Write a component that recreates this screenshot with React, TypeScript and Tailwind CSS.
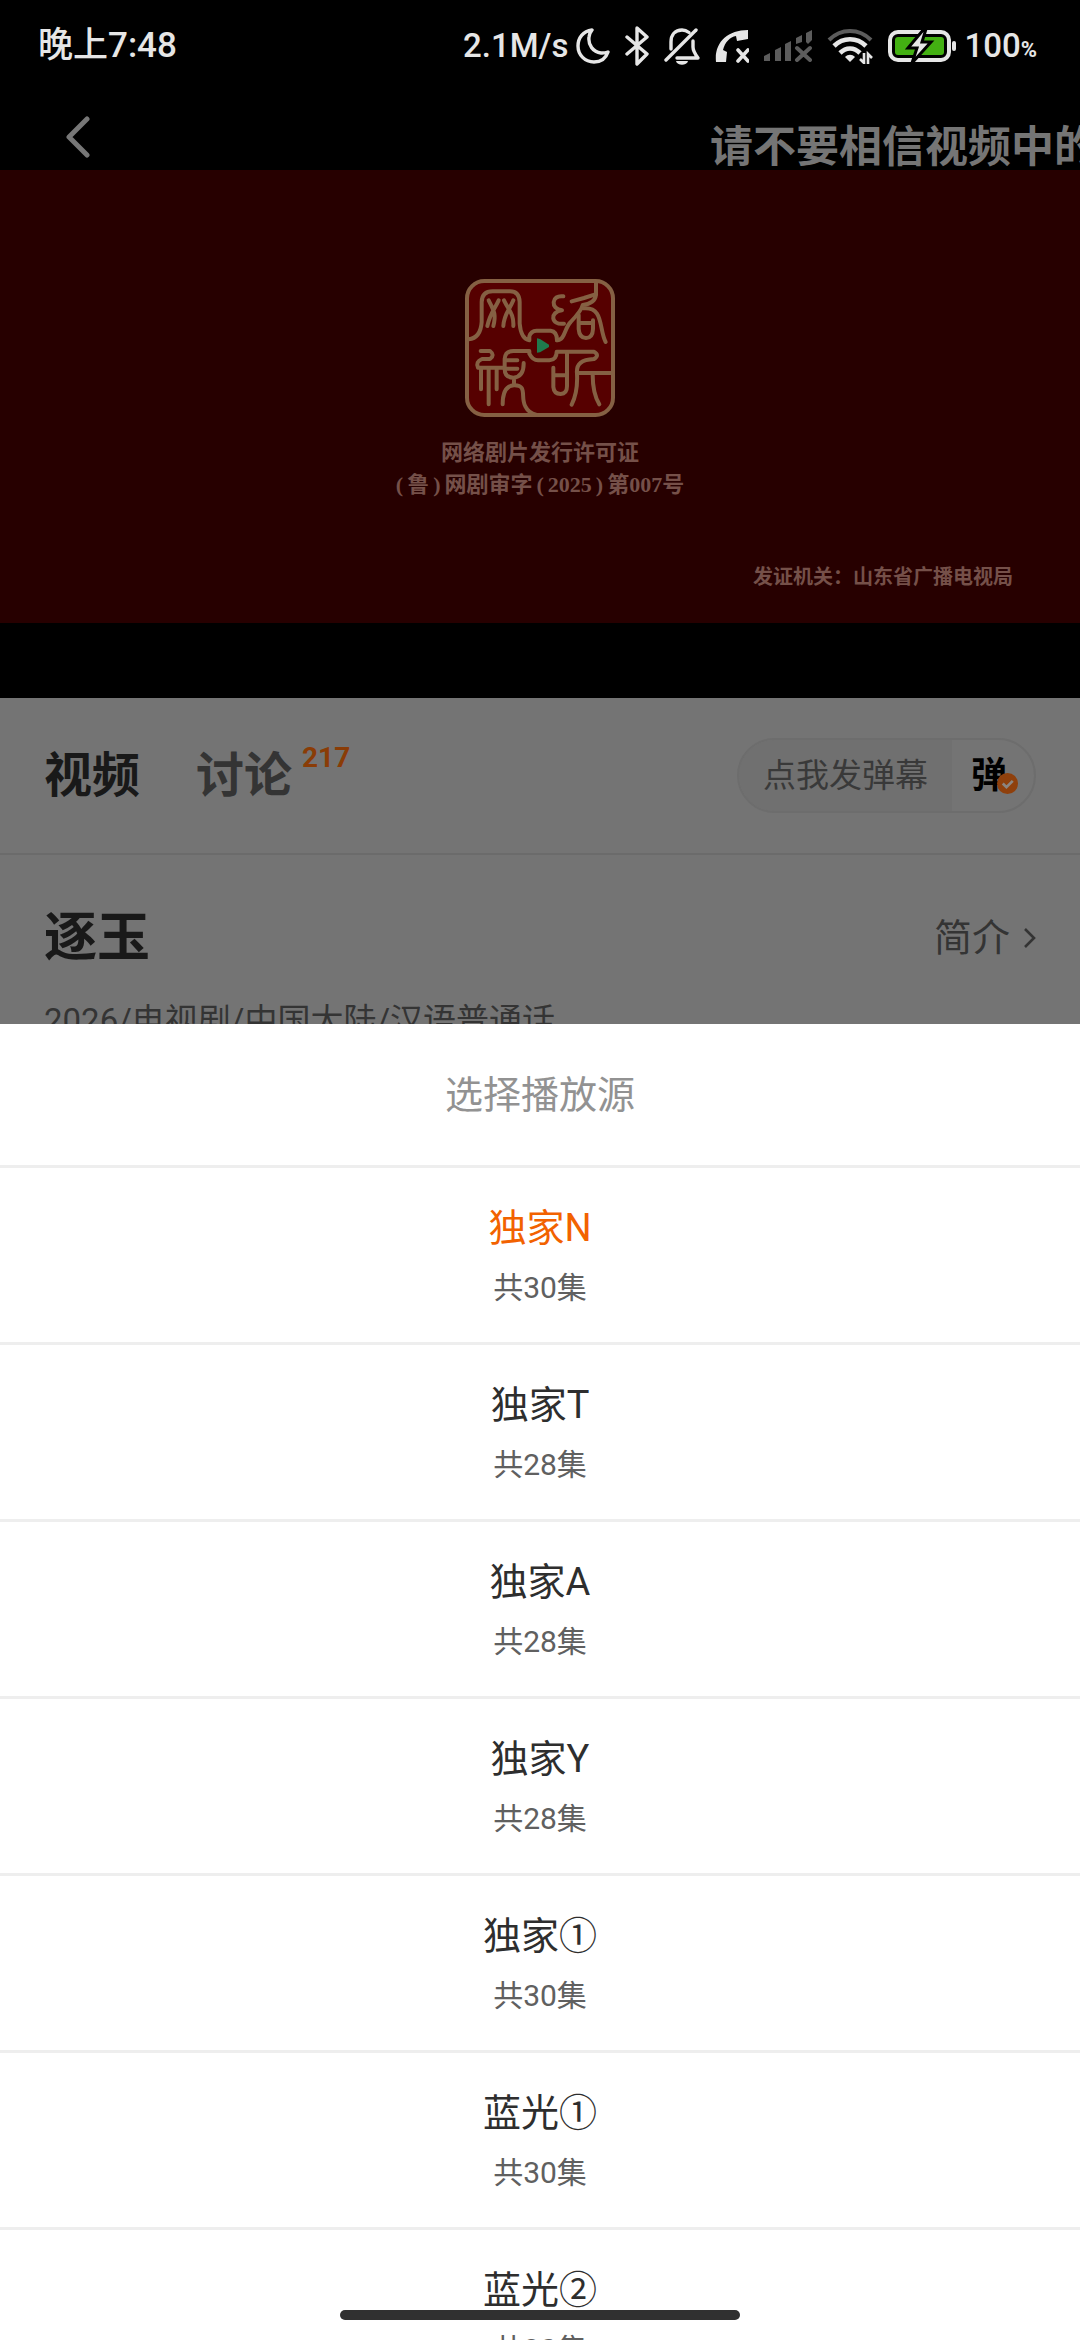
import { useState } from "react";
import clsx from "clsx";

interface Source {
  id: string;
  name: string;
  episodes: number;
}

const sources: Source[] = [
  { id: "n", name: "独家N", episodes: 30 },
  { id: "t", name: "独家T", episodes: 28 },
  { id: "a", name: "独家A", episodes: 28 },
  { id: "y", name: "独家Y", episodes: 28 },
  { id: "x1", name: "独家①", episodes: 30 },
  { id: "b1", name: "蓝光①", episodes: 30 },
  { id: "b2", name: "蓝光②", episodes: 30 },
];

function StatusIcons() {
  return (
    <div className="flex items-center gap-[15px]" aria-hidden="true">
      <svg className="w-[34px] h-[36px]" viewBox="0 0 34 36" fill="none" stroke="#e6e6e6" strokeWidth="3.4" strokeLinejoin="round">
        <path d="M16 2C7 3 2 10 2 18c0 9 7 16 16 16 7 0 12-4 14-10-3 1-5 1.200-7 1C17 24 12 17 13 9c.3-3 1.400-5 3-7z" />
      </svg>
      <svg className="w-[24px] h-[40px]" viewBox="0 0 24 40" fill="none" stroke="#e6e6e6" strokeWidth="3.4" strokeLinejoin="round" strokeLinecap="round">
        <path d="M2 11l20 17-10 10V2l10 9L2 28" />
      </svg>
      <svg className="w-[36px] h-[38px]" viewBox="0 0 36 38" fill="none" stroke="#e6e6e6" strokeWidth="3.4" strokeLinecap="round" strokeLinejoin="round">
        <path d="M7 22v-7C7 8 11 3 18 3c3 0 5 1 7 2.500" />
        <path d="M2 33L32 3" />
        <path d="M13 31h21c-3-4-5-7-5-11v-6" />
        <path d="M12 34h12c-1 5-11 5-12 0z" fill="#e6e6e6" stroke="none" />
      </svg>
      <svg className="w-[34px] h-[34px]" viewBox="0 0 34 34" fill="none">
        <path d="M1 33C-1 14 12 1 33 1v9l-11 2-1-5C15 8 10 13 8 21l4 2-1 10z" fill="#e6e6e6" />
        <path d="M23 21l10 11M33 21L23 32" stroke="#e6e6e6" strokeWidth="3.600" strokeLinecap="round" />
      </svg>
      <svg className="w-[48px] h-[32px]" viewBox="0 0 48 32" fill="#5c5c5c">
        <path d="M0 31v-5l6-3v8zM11 31V20l6-3v14zM21 31V14l6-3v20zM32 14V8l6-3v7zM42 12V3l6-3v10l-4 4z" />
        <path d="M33 18l13 12M46 18L33 30" stroke="#5c5c5c" strokeWidth="4" strokeLinecap="round" />
      </svg>
      <svg className="w-[46px] h-[36px]" viewBox="0 0 46 36" fill="none" strokeWidth="4">
        <path d="M2 12C14 0 32 0 44 12" stroke="#5c5c5c" />
        <path d="M7 18c9-9 23-9 32 0M13 25c6-6 14-6 20 0" stroke="#e6e6e6" strokeWidth="4.600" />
        <path d="M23 34l-5-5c3-3 7-3 10 0z" fill="#e6e6e6" />
        <path d="M37 25v10l-4-4M41 36V26l4 4" stroke="#e6e6e6" strokeWidth="2.600" />
      </svg>
      <svg className="w-[68px] h-[34px]" viewBox="0 0 68 34" fill="none">
        <rect x="2" y="3" width="59" height="28" rx="8" stroke="#e6e6e6" strokeWidth="4" />
        <rect x="7" y="8" width="49" height="18" rx="3" fill="#43b012" />
        <rect x="64" y="12" width="4" height="10" rx="2" fill="#e6e6e6" />
        <path d="M36 0L20 19h9l-5 15 19-21h-9l4-13z" fill="#e6e6e6" stroke="#000" strokeWidth="3" />
      </svg>
    </div>
  );
}

// licence seal shown before the first episode starts
function Seal() {
  return (
    <svg className="w-[150px] h-[138px]" viewBox="75 56 450 414" fill="none" role="img" aria-label="网络视听">
      <rect x="81" y="62" width="438" height="402" rx="52" fill="#560000" />
      <g stroke="#856043" strokeWidth="12" strokeLinecap="round" strokeLinejoin="round">
        <rect x="81" y="62" width="438" height="402" rx="52" />
        <path d="M86 237C112 234 123 215 125 185V125Q126 93 158 93H210Q238 93 239 125V190Q243 236 268 240V228Q272 212 290 211H332Q351 213 351 240" />
        <path d="M146 120C160 150 170 160 160 197M176 120C162 150 150 160 142 197" />
        <path d="M192 120C206 150 222 160 220 197M220 120C208 150 192 160 190 197" />
        <path d="M351 240C376 238 372 205 392 185Q425 150 428 134Q464 130 468 104V64M395 123L432 113L466 102" />
        <path d="M370 108C334 102 330 146 366 150C328 154 332 196 372 190" />
        <path d="M430 144C492 138 476 205 497 245" />
        <path d="M416 164V206Q418 233 438 233Q458 233 459 206V180M416 188H459" />
        <path d="M122 272H150Q166 284 150 296H126Q106 304 114 322H192" />
        <path d="M123 326V387M146 326V432M170 326V387" />
        <path d="M194 325V296Q196 272 220 272H268V280Q278 300 294 300H328Q350 298 350 274H462Q480 284 462 296C425 298 408 310 411 340Q414 395 395 433" />
        <path d="M194 325Q194 352 220 352Q252 350 251 308M196 300H232M196 325H232M222 352V374" />
        <path d="M188 432C188 392 200 376 222 375C264 374 240 410 256 438Q266 458 288 463" />
        <path d="M340 322V380Q342 401 362 401Q381 400 381 378V276M340 345H381" />
        <path d="M411 338H518M458 342Q458 400 478 432" />
      </g>
      <path d="M291 234L300 236L327 253V260L300 276L291 277z" fill="#1f7a4d" />
    </svg>
  );
}

function Player() {
  return (
    <section className="bg-black pb-[75px]">
      <header className="flex h-[78px] items-end justify-between">
        <button aria-label="返回" className="ml-[65px] pb-3">
          <svg className="w-[26px] h-[42px]" viewBox="0 0 26 42" fill="none" stroke="#777" strokeWidth="5" strokeLinecap="round" strokeLinejoin="round">
            <path d="M22 3L4 21l18 18" />
          </svg>
        </button>
        <p className="w-[370px] overflow-hidden whitespace-nowrap text-[43px] leading-[46px] font-bold text-[#757575]">
          请不要相信视频中的
        </p>
      </header>
      <div className="flex flex-col items-center bg-[#270000] pt-[109px] pb-[30px] font-['Liberation_Serif','Noto_Sans_CJK_SC',serif] font-bold text-[#755049]">
        <Seal />
        <p className="mt-5 text-[22px] leading-8">网络剧片发行许可证</p>
        <p className="text-[22px] leading-8">
          (<span className="mx-1">鲁</span>)<span className="mx-1">网剧审字</span>(
          <span className="mx-1">2025</span>)<span className="ml-1">第007号</span>
        </p>
        <p className="mt-[60px] mr-[67px] self-end text-[20px] leading-8">发证机关：山东省广播电视局</p>
      </div>
    </section>
  );
}

function TabBar() {
  return (
    <nav className="flex h-[157px] items-center justify-between border-b-2 border-[#6b6b6b] px-11">
      <div className="flex gap-14 text-5xl leading-[72px] font-bold">
        <button className="text-[#191919]">视频</button>
        <button className="flex text-[#343434]">
          讨论
          <span className="ml-2.5 text-[28px] leading-9 text-[#8a3c06]">217</span>
        </button>
      </div>
      <div className="flex h-[75px] overflow-hidden rounded-full border-2 border-[#6d6d6d]">
        <button className="bg-[#707070] px-6 text-[33px] text-[#393939]">点我发弹幕</button>
        <button aria-label="弹幕开关" className="relative w-[82px] pl-[19px] text-left text-[36px] font-bold text-black">
          弹
          <svg className="absolute top-[33px] left-[45px] w-[21px] h-[21px]" viewBox="0 0 20 20" fill="none">
            <circle cx="10" cy="10" r="10" fill="#8f400c" />
            <path d="M5.500 10l3.500 3.500 6-6" stroke="#8b8580" strokeWidth="2.600" />
          </svg>
        </button>
      </div>
    </nav>
  );
}

function ShowInfo() {
  return (
    <section className="h-[169px] overflow-hidden px-11 pt-[51px]">
      <div className="flex items-center justify-between">
        <h1 className="text-[53px] leading-[64px] font-bold text-[#191919]">逐玉</h1>
        <a href="#intro" className="flex items-center gap-3.5 text-[38px] leading-[64px] text-[#343434]">
          简介
          <svg className="w-[12px] h-[22px]" viewBox="0 0 12 22" fill="none" stroke="#343434" strokeWidth="2.600">
            <path d="M1 2l9 9-9 9" />
          </svg>
        </a>
      </div>
      <p className="mt-[31px] text-[33px] leading-10 whitespace-nowrap text-[#343434]">
        2026/电视剧/中国大陆/汉语普通话
      </p>
    </section>
  );
}

export default function App() {
  const [selected, setSelected] = useState("n");

  return (
    <div
      lang="zh-CN"
      className="relative flex h-screen flex-col overflow-hidden bg-[#747474] font-[Roboto,'Noto_Sans_CJK_SC',sans-serif]"
    >
      <div className="flex h-[92px] shrink-0 items-center justify-between bg-black pr-[43px] pl-[38px] text-[33px] font-medium text-[#e6e6e6]">
        <span className="text-[35px]">晚上7:48</span>
        <div className="flex items-center gap-2">
          <span>2.1M/s</span>
          <StatusIcons />
          <span>
            100<span className="text-[22px] font-bold">%</span>
          </span>
        </div>
      </div>

      <main className="shrink-0">
        <Player />
        <TabBar />
        <ShowInfo />
      </main>

      <section role="dialog" aria-labelledby="sheet-title" className="min-h-0 flex-1 overflow-hidden bg-white">
        <h2 id="sheet-title" className="border-b-3 border-[#eeeeee] pt-px text-center text-[38px] leading-[140px] text-[#929292]">
          选择播放源
        </h2>
        <ul>
          {sources.map((source) => (
            <li key={source.id} className="border-b-3 border-[#eeeeee]">
              <button onClick={() => setSelected(source.id)} className="block w-full pt-[30px] pb-6 text-center">
                <span
                  className={clsx(
                    "block text-[38px] leading-[60px]",
                    selected === source.id ? "text-[#f26200]" : "text-[#2e2e2e]"
                  )}
                >
                  {source.name}
                </span>
                <span className="block text-[30px] leading-[60px] text-[#606060]">共{source.episodes}集</span>
              </button>
            </li>
          ))}
        </ul>
      </section>

      <div className="absolute bottom-5 left-1/2 h-[10px] w-[400px] -translate-x-1/2 rounded-full bg-[#303030]" />
    </div>
  );
}
